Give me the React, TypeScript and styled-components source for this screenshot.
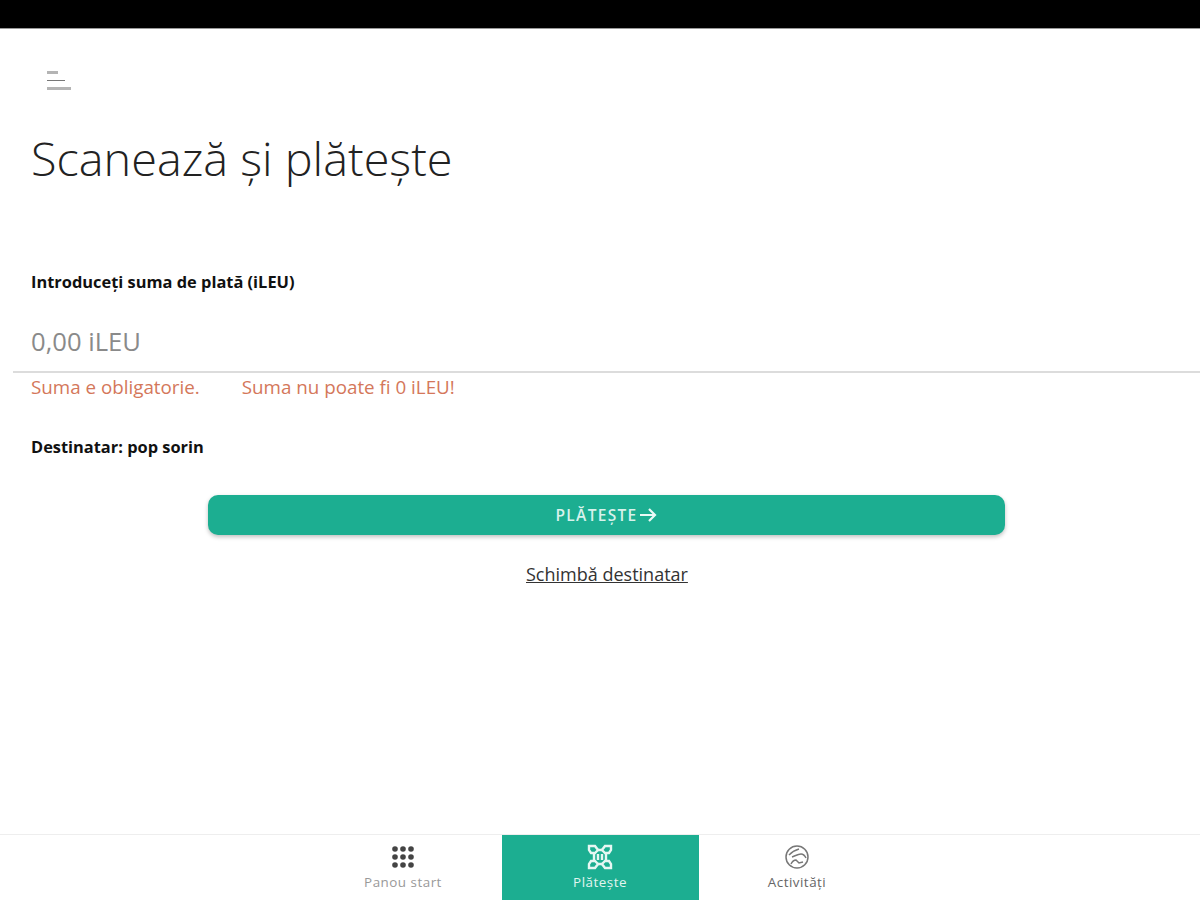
import { createGlobalStyle } from "styled-components";
import styled from "styled-components";

const GlobalStyle = createGlobalStyle`
    html, body {
        margin: 0;
        padding: 0;
        background: #fff;
        font-family: "Open Sans", sans-serif;
    }
`;

const Screen = styled.div`
    display: flex;
    flex-direction: column;
    width: 1200px;
    height: 900px;
    overflow: hidden;
    background: #fff;
`;

const StatusBar = styled.div`
    flex: none;
    height: 29px;
    background: #000;
    border-bottom: 1px solid #999;
    box-sizing: border-box;
`;

const Main = styled.main`
    flex: 1;
    display: flex;
    flex-direction: column;
    padding: 41px 0 0 0;
`;

const MenuButton = styled.button`
    display: flex;
    flex-direction: column;
    align-items: flex-start;
    gap: 6px;
    width: 24px;
    margin: 1px 0 0 47px;
    padding: 0;
    border: 0;
    background: none;
`;

const MenuLine = styled.span<{ $width: number; $dark?: boolean }>`
    display: block;
    width: ${(p) => p.$width}px;
    height: ${(p) => (p.$dark ? 1 : 3)}px;
    background: ${(p) => (p.$dark ? "#777" : "#b4b4b4")};
`;

const Title = styled.h1`
    margin: 36px 0 0 31px;
    font-size: 46.8px;
    line-height: 64px;
    font-weight: 300;
    color: #222;
`;

const Label = styled.div`
    margin: 82px 0 0 31px;
    font-size: 16.4px;
    line-height: 20px;
    font-weight: 700;
    color: #111;
`;

const AmountField = styled.div`
    margin: 33px 0 0 13px;
    padding: 0 0 13px 18px;
    font-size: 25.6px;
    line-height: 33px;
    color: #8a8a8a;
    border-bottom: 2px solid #dcdcdc;
`;

const Errors = styled.div`
    display: flex;
    gap: 42px;
    margin: 2px 0 0 31px;
    font-size: 18.8px;
    line-height: 25px;
    color: #d4775a;
`;

const Recipient = styled.div`
    margin: 37px 0 0 31px;
    font-size: 16.4px;
    line-height: 20px;
    font-weight: 700;
    color: #111;
`;

const PayButton = styled.button`
    display: flex;
    align-items: center;
    justify-content: center;
    gap: 2px;
    width: 797px;
    height: 40px;
    margin: 38px 0 0 208px;
    padding: 0;
    border: 0;
    border-radius: 10px;
    background: #1cae91;
    box-shadow: 0 2px 4px rgba(0, 0, 0, 0.25);
    color: #d8f2ec;
    font-family: inherit;
    font-size: 15.5px;
    font-weight: 600;
    letter-spacing: 1.3px;
`;

const ChangeLink = styled.a`
    align-self: flex-start;
    margin: 28px 0 0 526px;
    font-size: 18px;
    line-height: 23px;
    color: #333;
    text-decoration: underline;
`;

const BottomNav = styled.nav`
    flex: none;
    display: flex;
    justify-content: center;
    height: 66px;
    border-top: 1px solid #eee;
    box-sizing: border-box;
`;

const NavItem = styled.div<{ $active?: boolean }>`
    display: flex;
    flex-direction: column;
    align-items: center;
    width: 197px;
    padding-top: 9px;
    box-sizing: border-box;
    background: ${(p) => (p.$active ? "#1cae91" : "transparent")};
    color: ${(p) => (p.$active ? "#e2f5f0" : "#999")};
`;

const NavIcon = styled.div`
    display: flex;
    align-items: center;
    justify-content: center;
    height: 26px;
`;

const NavLabel = styled.span<{ $dark?: boolean }>`
    margin-top: 4px;
    font-size: 13.4px;
    line-height: 17px;
    font-weight: 500;
    letter-spacing: 0.5px;
    color: ${(p) => (p.$dark ? "#666" : "inherit")};
`;

const GridIcon = () => (
    <svg width="24" height="24" viewBox="0 0 24 24" fill="#444">
        {[4, 12, 20].flatMap((y) =>
            [4, 12, 20].map((x) => <circle key={`${x}-${y}`} cx={x} cy={y} r="2.8" />)
        )}
    </svg>
);

const ScanIcon = () => (
    <svg width="28" height="26" viewBox="0 0 28 26" fill="none" stroke="#e6f7f3" strokeWidth="2.4">
        <path d="M3 2h6l3 4-3 3H5L3 6z" />
        <path d="M25 2h-6l-3 4 3 3h4l2-3z" />
        <path d="M3 24h6l3-4-3-3H5l-2 3z" />
        <path d="M25 24h-6l-3-4 3-3h4l2 3z" />
        <path d="M12 6h4M12 20h4M8 9v8M20 9v8M12 10v6M16 10v6" />
    </svg>
);

const GlobeIcon = () => (
    <svg width="26" height="26" viewBox="0 0 26 26" fill="none" stroke="#777" strokeWidth="1.5">
        <circle cx="13" cy="13" r="11" />
        <path d="M5 11c3-3 6-5 10-6" />
        <path d="M8 13c3-1 6-3 9-3s4 2 5 4" />
        <path d="M7 20c1-2 3-4 5-4l3 3 4-1" />
    </svg>
);

const ArrowIcon = () => (
    <svg width="18" height="16" viewBox="0 0 18 16" fill="none" stroke="#eafaf6" strokeWidth="2.2">
        <path d="M1 8h15M10 2l6 6-6 6" />
    </svg>
);

export default function App() {
    return (
        <Screen>
            <GlobalStyle />
            <StatusBar />
            <Main>
                <MenuButton aria-label="Meniu">
                    <MenuLine $width={11} />
                    <MenuLine $width={18} $dark />
                    <MenuLine $width={24} />
                </MenuButton>
                <Title>Scanează și plătește</Title>
                <Label>Introduceți suma de plată (iLEU)</Label>
                <AmountField>0,00 iLEU</AmountField>
                <Errors>
                    <span>Suma e obligatorie.</span>
                    <span>Suma nu poate fi 0 iLEU!</span>
                </Errors>
                <Recipient>Destinatar: pop sorin</Recipient>
                <PayButton>
                    PLĂTEȘTE
                    <ArrowIcon />
                </PayButton>
                <ChangeLink>Schimbă destinatar</ChangeLink>
            </Main>
            <BottomNav>
                <NavItem>
                    <NavIcon>
                        <GridIcon />
                    </NavIcon>
                    <NavLabel>Panou start</NavLabel>
                </NavItem>
                <NavItem $active>
                    <NavIcon>
                        <ScanIcon />
                    </NavIcon>
                    <NavLabel>Plătește</NavLabel>
                </NavItem>
                <NavItem>
                    <NavIcon>
                        <GlobeIcon />
                    </NavIcon>
                    <NavLabel $dark>Activități</NavLabel>
                </NavItem>
            </BottomNav>
        </Screen>
    );
}
